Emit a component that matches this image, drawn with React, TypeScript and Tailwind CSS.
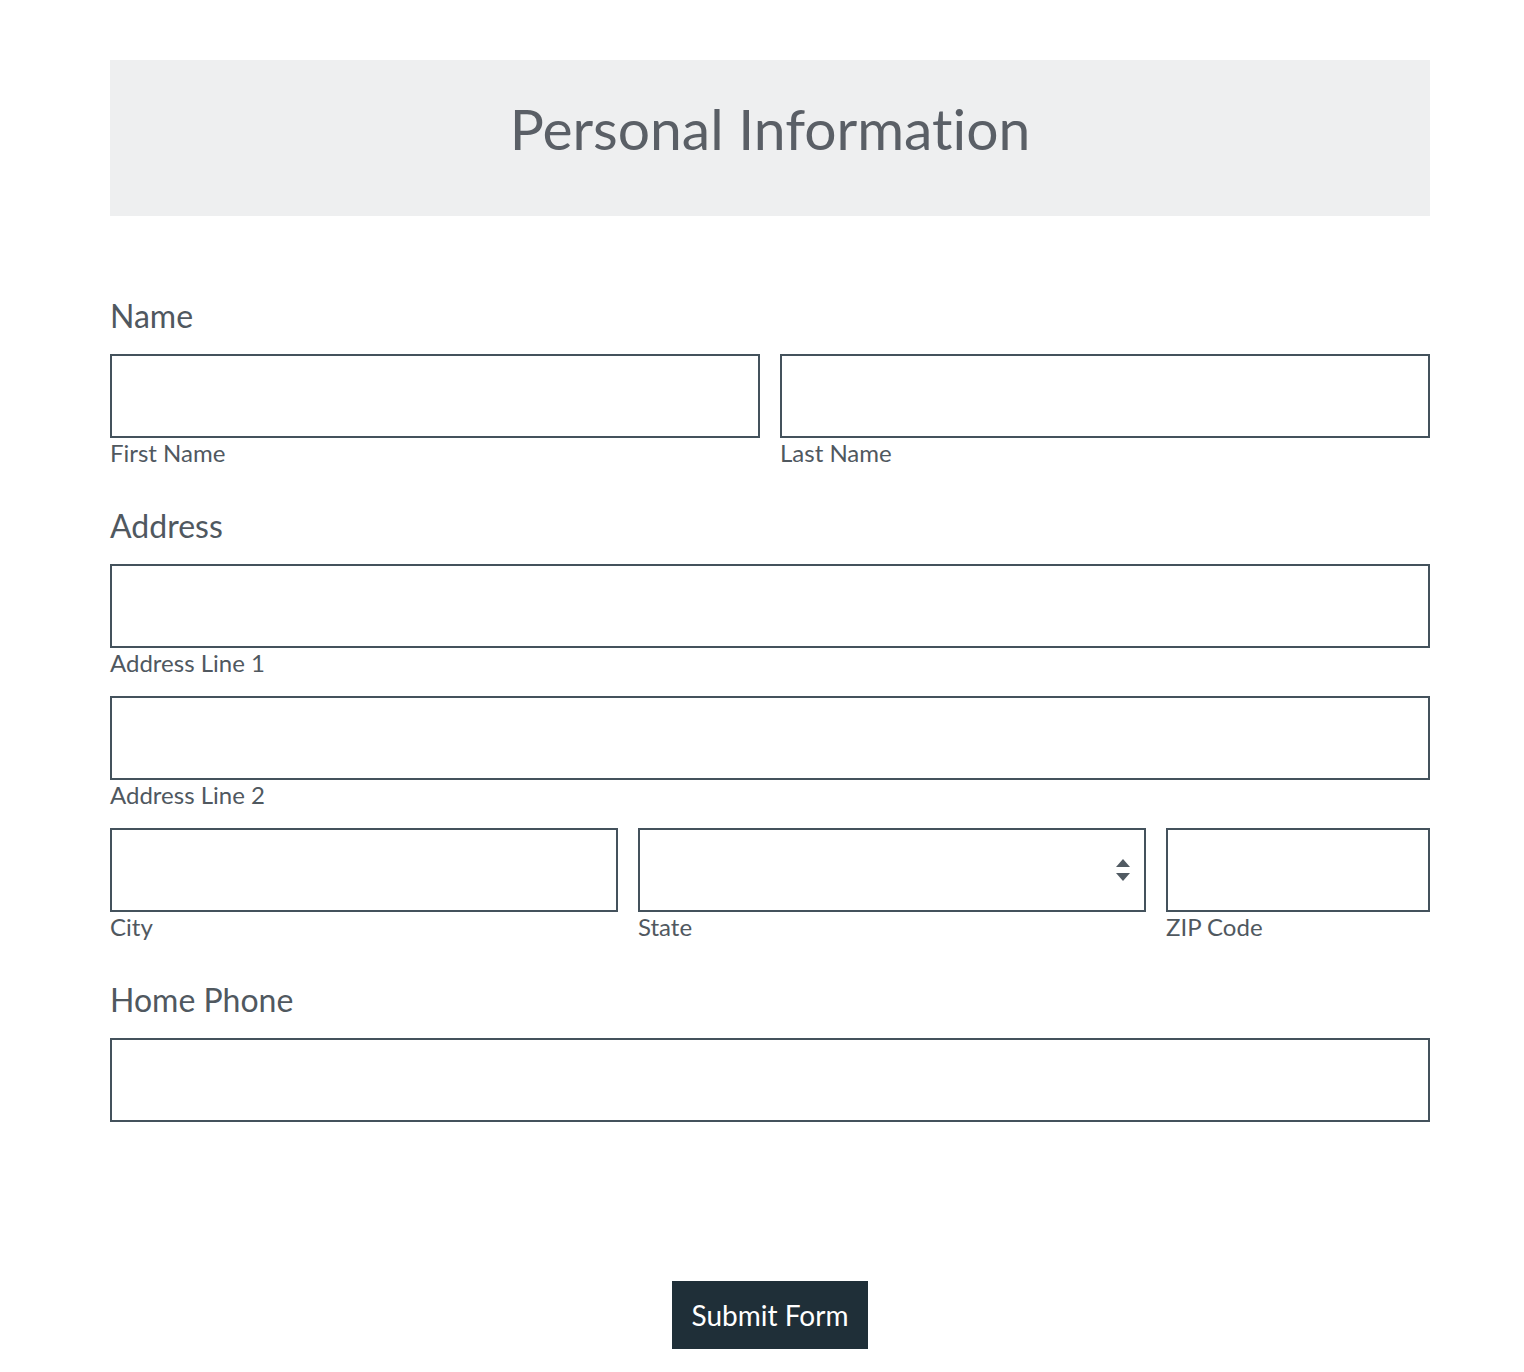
import { ChangeEvent, useState } from "react";

type FieldProps = {
  label: string;
  value: string;
  onChange: (e: ChangeEvent<HTMLInputElement>) => void;
};

function Field({ label, value, onChange }: FieldProps) {
  return (
    <label className="flex flex-col">
      <input
        value={value}
        onChange={onChange}
        className="h-[84px] w-full border-2 border-[#44525c] bg-white px-4 text-[24px] text-[#3c4650] outline-none"
      />
      <span className="text-[24px] leading-[30px] text-[#50585f]">{label}</span>
    </label>
  );
}

function StateSelect() {
  return (
    <label className="flex flex-col">
      <div className="relative">
        <select
          defaultValue=""
          className="h-[84px] w-full appearance-none border-2 border-[#44525c] bg-white px-4 text-[24px] text-[#3c4650] outline-none"
        >
          <option value="" />
          <option value="CA">California</option>
          <option value="NY">New York</option>
          <option value="TX">Texas</option>
        </select>
        <svg
          className="pointer-events-none absolute right-[15px] top-1/2 -translate-y-1/2"
          width="16"
          height="26"
          viewBox="0 0 16 26"
        >
          <path d="M8 2 L15 10 L1 10 Z" fill="#515a62" />
          <path d="M1 16 L15 16 L8 24 Z" fill="#515a62" />
        </svg>
      </div>
      <span className="text-[24px] leading-[30px] text-[#50585f]">State</span>
    </label>
  );
}

export default function App() {
  const [form, setForm] = useState({
    first: "",
    last: "",
    line1: "",
    line2: "",
    city: "",
    zip: "",
    phone: "",
  });

  const set = (key: keyof typeof form) => (e: ChangeEvent<HTMLInputElement>) =>
    setForm({ ...form, [key]: e.target.value });

  return (
    <div className="min-h-screen bg-white font-['Lato','Liberation_Sans',sans-serif] [font-variant-ligatures:none]">
      <div className="ml-[110px] w-[1320px] pt-[60px] pb-[22px]">
        <div className="flex h-[156px] items-center justify-center bg-[#eeeff0] pb-[20px]">
          <h1 className="text-[57px] leading-none text-[#5a5f66]">Personal Information</h1>
        </div>

        <form onSubmit={(e) => e.preventDefault()} className="mt-[80px] flex flex-col">
          <h2 className="text-[32px] leading-[40px] text-[#50585f]">Name</h2>
          <div className="mt-[18px] grid grid-cols-2 gap-5">
            <Field label="First Name" value={form.first} onChange={set("first")} />
            <Field label="Last Name" value={form.last} onChange={set("last")} />
          </div>

          <h2 className="mt-[38px] text-[32px] leading-[40px] text-[#50585f]">Address</h2>
          <div className="mt-[18px] flex flex-col gap-[18px]">
            <Field label="Address Line 1" value={form.line1} onChange={set("line1")} />
            <Field label="Address Line 2" value={form.line2} onChange={set("line2")} />
            <div className="grid grid-cols-[508px_508px_1fr] gap-5">
              <Field label="City" value={form.city} onChange={set("city")} />
              <StateSelect />
              <Field label="ZIP Code" value={form.zip} onChange={set("zip")} />
            </div>
          </div>

          <h2 className="mt-[38px] text-[32px] leading-[40px] text-[#50585f]">Home Phone</h2>
          <div className="mt-[18px]">
            <input
              value={form.phone}
              onChange={set("phone")}
              className="h-[84px] w-full border-2 border-[#44525c] bg-white px-4 text-[24px] text-[#3c4650] outline-none"
            />
          </div>

          <div className="mt-[159px] flex justify-center">
            <button
              type="submit"
              className="h-[68px] w-[196px] bg-[#1f2f38] text-[28px] text-white"
            >
              Submit Form
            </button>
          </div>
        </form>
      </div>
    </div>
  );
}
